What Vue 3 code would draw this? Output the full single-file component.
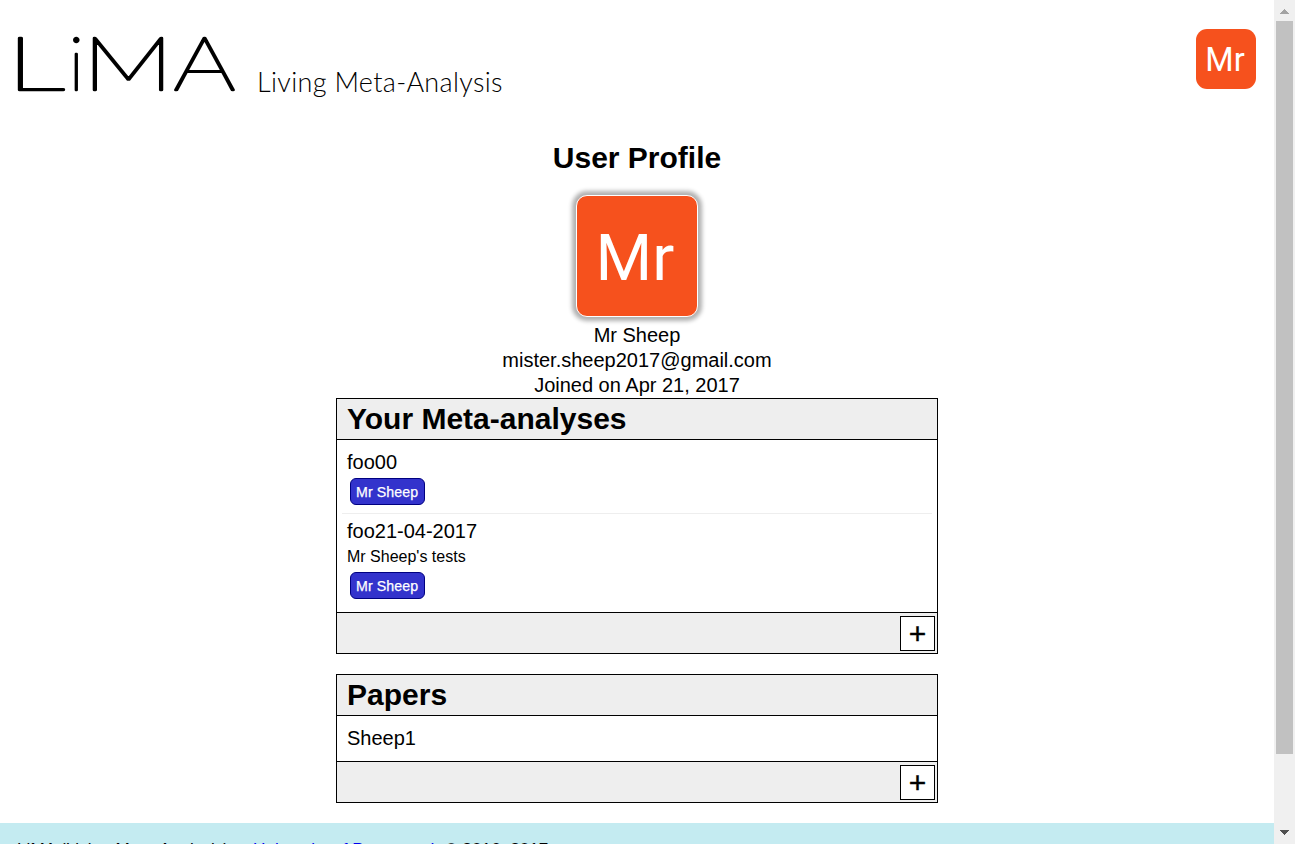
<script setup>
const panels = [
  {
    title: 'Your Meta-analyses',
    items: [
      { title: 'foo00', tags: ['Mr Sheep'] },
      { title: 'foo21-04-2017', note: "Mr Sheep's tests", tags: ['Mr Sheep'] },
    ],
  },
  { title: 'Papers', items: [{ title: 'Sheep1', tags: [] }] },
]
</script>

<template>
  <div class="window">
    <div class="page">
      <header class="top">
        <div class="brand">
          <svg class="logo" width="240" height="120" viewBox="0 0 240 120">
            <text y="90"><tspan x="-2" textLength="59" lengthAdjust="spacingAndGlyphs">L</tspan><tspan x="60.500">i</tspan><tspan x="74.500" textLength="91" lengthAdjust="spacingAndGlyphs">M</tspan><tspan x="165.500" textLength="62" lengthAdjust="spacingAndGlyphs">A</tspan></text>
          </svg>
          <span class="tagline">Living Meta-Analysis</span>
        </div>
        <div class="avatar small"><span>Mr</span></div>
      </header>

      <main>
        <h1>User Profile</h1>
        <section class="profile">
          <div class="avatar large"><span>Mr</span></div>
          <div>Mr Sheep</div>
          <div>mister.sheep2017@gmail.com</div>
          <div>Joined on Apr 21, 2017</div>
        </section>

        <section v-for="panel in panels" :key="panel.title" class="panel">
          <h2>{{ panel.title }}</h2>
          <ul>
            <li v-for="item in panel.items" :key="item.title">
              <div class="name">{{ item.title }}</div>
              <div v-if="item.note" class="note">{{ item.note }}</div>
              <div v-if="item.tags.length" class="tags">
                <span v-for="tag in item.tags" :key="tag" class="tag">{{ tag }}</span>
              </div>
            </li>
          </ul>
          <div class="actions"><button>+</button></div>
        </section>
      </main>

      <footer>LiMA (Living Meta-Analysis) at <a>University of Portsmouth</a> © 2016–2017</footer>
    </div>

    <div class="scrollbar">
      <svg width="21" height="21" viewBox="0 0 21 21" shape-rendering="crispEdges"><path d="M6 14h9l-4.500-5z" fill="#a3a3a3" /></svg>
      <div class="thumb"></div>
      <svg width="21" height="21" viewBox="0 0 21 21" shape-rendering="crispEdges"><path d="M6 7h9l-4.500 5z" fill="#505050" /></svg>
    </div>
  </div>
</template>

<style>
body { overflow: hidden; background: #fff; }
</style>

<style scoped>
.window {
  display: flex;
  height: 844px;
  overflow: hidden;
  font: 20px/25px "Liberation Sans", Arial, sans-serif;
  color: #000;
}
.page { width: 1274px; height: 844px; overflow: hidden; }
.top {
  display: flex;
  justify-content: space-between;
  align-items: flex-start;
  height: 140px;
  padding: 0 18px 0 8px;
}
.brand { display: flex; align-items: flex-start; }
.logo { display: block; overflow: visible; }
.logo text {
  font: 100 75px Lato, sans-serif;
  stroke: #000;
  stroke-width: 2.4px;
  stroke-linejoin: round;
}
.tagline {
  margin: 64px 0 0 9px;
  font: 300 27px/36px Lato, sans-serif;
  letter-spacing: 0.32px;
  white-space: nowrap;
}
.avatar {
  display: flex;
  align-items: center;
  justify-content: center;
  background: #f6511d;
  color: #fff;
  font-family: Roboto, sans-serif;
}
.small {
  width: 60px;
  height: 60px;
  margin-top: 29px;
  border-radius: 11px;
  font-size: 32.5px;
}
.small span { margin: 3px 2px 0 0; }
.large {
  width: 120px;
  height: 120px;
  margin: 0 auto 6px;
  border: 1px solid #fff;
  border-radius: 11px;
  font-size: 65px;
  box-shadow: 0 0 4px 4px #b0b0b0;
}
.large span { margin: 5px 4px 0 0; }
h1 {
  margin: 0;
  font-size: 30px;
  line-height: 35px;
  text-align: center;
}
.profile { margin-top: 20px; text-align: center; }
.panel {
  width: 600px;
  margin: 0 auto 20px;
  border: 1px solid #000;
}
h2 {
  margin: 0;
  height: 40px;
  padding-left: 10px;
  border-bottom: 1px solid #000;
  background: #eee;
  font-size: 30px;
  line-height: 40px;
}
ul { margin: 0; padding: 5px 5px; list-style: none; }
li { padding: 5px; }
li + li { border-top: 1px solid #eee; }
.note { font-size: 16px; }
.tags { display: flex; padding: 3px; }
.tag {
  width: 63px;
  height: 25px;
  padding: 0 5px;
  border: 1px solid #000080;
  border-radius: 6px;
  background: #3333cc;
  color: #fff;
  font-size: 14.2px;
  line-height: 27px;
  letter-spacing: 0.08px;
  white-space: nowrap;
  -webkit-text-stroke: 0.25px #fff;
}
.actions {
  display: flex;
  justify-content: flex-end;
  height: 34px;
  padding: 3px 2px;
  border-top: 1px solid #000;
  background: #eee;
}
button {
  width: 35px;
  height: 35px;
  padding: 0;
  border: 1px solid #000;
  background: #fff;
  color: #000;
  font: 30px/33px "Liberation Sans", Arial, sans-serif;
  -webkit-text-stroke: 0.4px #000;
}
footer {
  height: 60px;
  padding: 14px 17px;
  background: #c4ebf1;
  font-size: 17.2px;
}
footer a { color: #00e; }
.scrollbar {
  display: flex;
  flex-direction: column;
  width: 21px;
  background: #f0f0f0;
}
.scrollbar svg { display: block; flex: none; }
.thumb { width: 17px; height: 733px; margin: 0 2px 69px; background: #c1c1c1; }
</style>
